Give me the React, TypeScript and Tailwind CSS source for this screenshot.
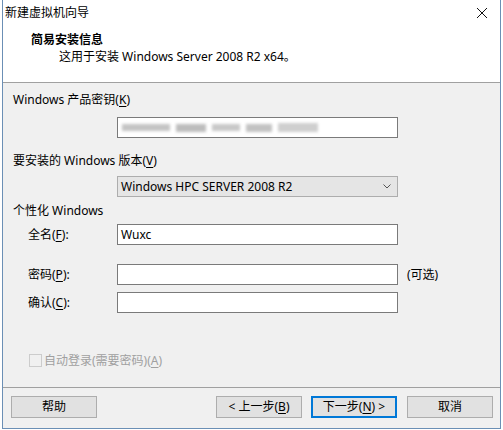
const font = "font-['Segoe_UI','Noto_Sans','Noto_Sans_CJK_SC',sans-serif]";

const U = ({ children }: { children: string }) => (
  <span className="underline underline-offset-[2px]">{children}</span>
);

const TextBox = ({ children, extra = "" }: { children?: React.ReactNode; extra?: string }) => (
  <div
    className={`w-[281px] h-[21px] bg-white border border-[#7a7a7a] flex items-center px-[3px] text-[12px] text-black ${extra}`}
  >
    {children}
  </div>
);

const Btn = ({ children, primary = false, w = "w-[86px]" }: { children: React.ReactNode; primary?: boolean; w?: string }) => (
  <div
    className={`${w} h-[22px] flex items-center justify-center bg-[#e1e1e1] text-[12px] text-black ${
      primary ? "border-2 border-[#0078d7]" : "border border-[#adadad]"
    }`}
  >
    {children}
  </div>
);

export default function App() {
  return (
    <div className={`w-[503px] h-[430px] bg-white ${font} leading-none`}>
      <div className="ml-[2px] w-[499px] h-[429px] border-x border-b border-[#6b8fb5] flex flex-col">
        {/* header */}
        <div className="h-[83px] bg-white border-b border-[#a0a0a0] flex flex-col">
          <div className="h-[26px] flex items-center justify-between pl-[2px] pr-[8px]">
            <span className="text-[12px] text-black">新建虚拟机向导</span>
            <svg width="12" height="12" viewBox="0 0 12 12" className="mr-[4px]">
              <path d="M1 1 L11 11 M11 1 L1 11" stroke="#111" strokeWidth="1" />
            </svg>
          </div>
          <div className="pl-[28px] mt-[8px] text-[12px] font-bold text-black">简易安装信息</div>
          <div className="pl-[56px] mt-[5px] text-[12px] text-black">这用于安装 Windows Server 2008 R2 x64。</div>
        </div>

        {/* body */}
        <div className="flex-1 bg-[#f0f0f0] flex flex-col pl-[10px] text-[12px] text-black">
          <div className="mt-[7px] h-[20px] flex items-center">
            Windows 产品密钥(<U>K</U>)
          </div>
          <div className="mt-[7px] pl-[104px]">
            <TextBox>
              <div className="flex items-center gap-[6px] blur-[1.5px] ml-[1px]">
                <span className="w-[48px] h-[7px] bg-[#c4c4c4]" />
                <span className="w-[30px] h-[8px] bg-[#bdbdbd]" />
                <span className="w-[28px] h-[7px] bg-[#c8c8c8]" />
                <span className="w-[26px] h-[8px] bg-[#c2c2c2]" />
                <span className="w-[40px] h-[9px] bg-[#cfcfcf]" />
              </div>
            </TextBox>
          </div>
          <div className="mt-[13px] h-[20px] flex items-center">
            要安装的 Windows 版本(<U>V</U>)
          </div>
          <div className="mt-[5px] pl-[104px]">
            <div className="w-[281px] h-[21px] bg-[#e5e5e5] border border-[#adadad] flex items-center justify-between pl-[3px] pr-[6px]">
              <span>Windows HPC SERVER 2008 R2</span>
              <svg width="8" height="5" viewBox="0 0 8 5">
                <path d="M0.5 0.5 L4 4 L7.5 0.5" stroke="#555" strokeWidth="1" fill="none" />
              </svg>
            </div>
          </div>
          <div className="mt-[4px] h-[20px] flex items-center">个性化 Windows</div>

          <div className="mt-[3px] flex items-center">
            <span className="w-[104px] pl-[15px]">
              全名(<U>F</U>):
            </span>
            <TextBox>Wuxc</TextBox>
          </div>
          <div className="mt-[19px] flex items-center">
            <span className="w-[104px] pl-[15px]">
              密码(<U>P</U>):
            </span>
            <TextBox />
            <span className="ml-[9px]">(可选)</span>
          </div>
          <div className="mt-[7px] flex items-center">
            <span className="w-[104px] pl-[15px]">
              确认(<U>C</U>):
            </span>
            <TextBox />
          </div>

          <div className="mt-[41px] pl-[16px] flex items-center text-[#a0a0a0]">
            <span className="w-[13px] h-[13px] border border-[#cccccc] bg-[#f0f0f0] mr-[2px]" />
            自动登录(需要密码)(<U>A</U>)
          </div>
        </div>

        {/* footer */}
        <div className="h-[41px] bg-[#f0f0f0] border-t border-[#a0a0a0] flex items-start pt-[8px] pl-[8px]">
          <Btn>帮助</Btn>
          <div className="ml-auto flex items-center gap-[9px] pr-[7px]">
            <Btn>
              &lt; 上一步(<U>B</U>)
            </Btn>
            <Btn primary>
              下一步(<U>N</U>) &gt;
            </Btn>
            <div className="ml-[1px]">
              <Btn>取消</Btn>
            </div>
          </div>
        </div>
      </div>
    </div>
  );
}
